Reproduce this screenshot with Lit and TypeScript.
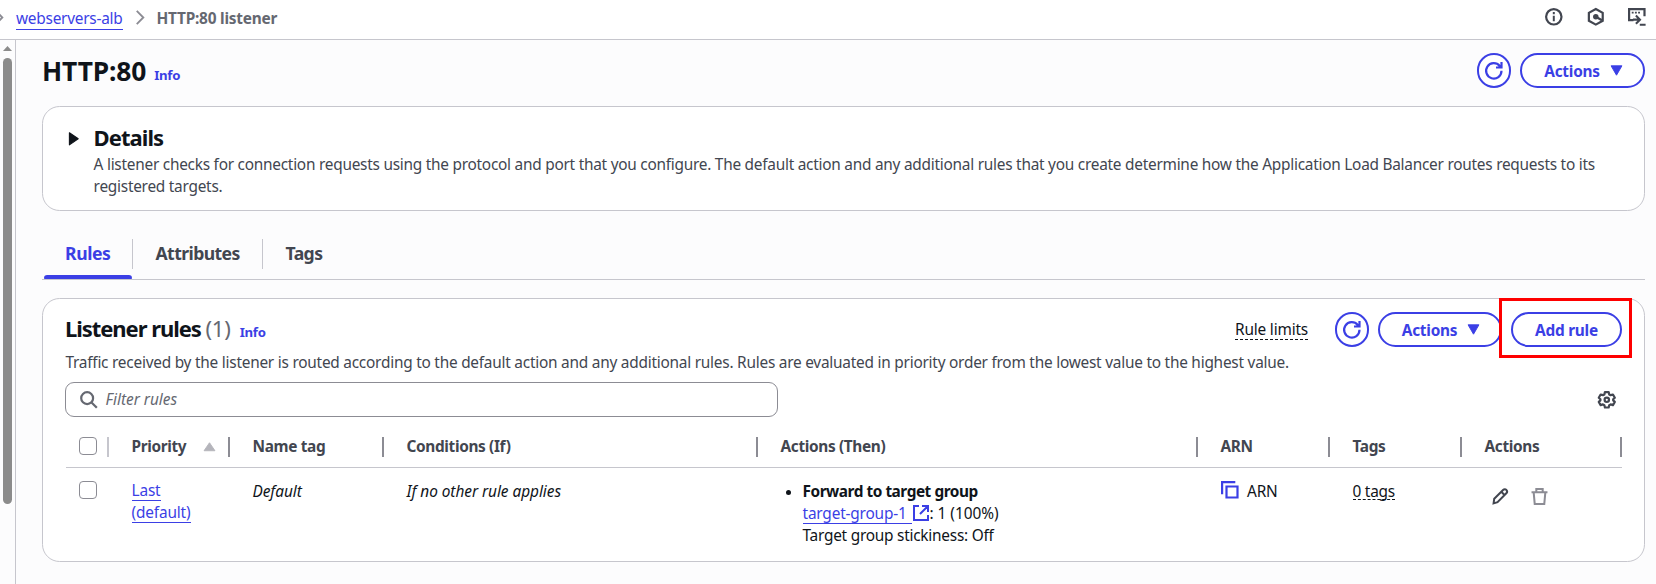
import { LitElement, html, svg, css } from "lit";
import { customElement, property } from "lit/decorators.js";

const shapes: Record<string, unknown> = {
  chevron: svg`<path d="M4 1l7 7-7 7"/>`,
  info: svg`<circle cx="8" cy="8" r="7"/><path d="M8 7v5M8 3.6v2" stroke-width="1.8"/>`,
  hex: svg`<path d="M8 .9l6.3 3.5v7.2L8 15.1l-6.3-3.5V4.4z"/><circle cx="8" cy="8" r="2.5" fill="currentColor" stroke="none"/><path d="M8 8l5.6 3.2"/>`,
  shell: svg`<path d="M15 7.5V1H1v10h4"/><path d="M3.400 4.200h1.700M6.300 4.200H8M9.200 4.200h1.700" stroke-width="1.500"/><path d="M4.500 10.600h6M7.200 6.900l3.700 3.700-3.700 3.700M10.700 15.200H16" stroke-width="1.900"/>`,
  refresh: svg`<path d="M15 8A7 7 0 1 1 13.400 3.600L14.400 5M15 0v5h-5"/>`,
  search: svg`<circle cx="6.500" cy="6.500" r="5.400"/><path d="M10.500 10.500l4.800 4.800"/>`,
  gear: svg`<path d="M6.300 1h3.400l.5 2.100 1.300.7 2.100-.6 1.700 2.900L13.800 7.500v1l1.500 1.400-1.700 2.900-2.100-.6-1.300.7L9.700 15H6.300l-.5-2.100-1.300-.7-2.100.6L.7 9.900l1.500-1.400v-1L.7 6.100l1.700-2.900 2.100.6 1.300-.7z" stroke-linejoin="round"/><circle cx="8" cy="8" r="2"/>`,
  external: svg`<path d="M6 1H1v14h14v-5M9 1h6v6M15 1L7 9"/>`,
  copy: svg`<path d="M1 12V1h12"/><path d="M5 5h10v10H5z"/>`,
  edit: svg`<path d="M1.500 14.500l.6-4.400 8.300-8.300c1-1 2.300-.9 3.100 0s1 2.200 0 3.200l-8.300 8.300zM8.800 3.600l3.400 3.400"/>`,
  trash: svg`<path d="M.5 4h15M5 4V1h6v3M2.500 4l1 11h9l1-11"/>`,
  down: svg`<path d="M2.200 3h11.600L8 13z" fill="currentColor" stroke-linejoin="round"/>`,
  up: svg`<path d="M2.200 12.500h11.600L8 4z" fill="currentColor" stroke-linejoin="round"/>`,
  right: svg`<path d="M4 2.500v11l8-5.500z" fill="currentColor" stroke-linejoin="round"/>`,
};

@customElement("ui-icon")
class UiIcon extends LitElement {
  @property() name = "";
  static styles = css`
    :host { display: block; flex: none; width: 17.6px; height: 17.6px; }
    svg { display: block; width: 100%; height: 100%; overflow: visible; fill: none; stroke: currentColor; stroke-width: var(--stroke, 2); }
  `;
  render() {
    return html`<svg viewBox="0 0 16 16">${shapes[this.name]}</svg>`;
  }
}

@customElement("app-root")
class AppRoot extends LitElement {
  static styles = css`
    :host { display: flex; flex-direction: column; height: 584px; overflow: hidden; box-sizing: border-box; background: #fcfcfd; color: #0f141a; font: 15.4px/22px "Noto Sans", "Open Sans", sans-serif; letter-spacing: -0.24px; }
    *, *::before, *::after { box-sizing: border-box; }
    h1, h2, p, ul { margin: 0; }
    .top { flex: none; height: 40px; display: flex; align-items: center; background: #fff; border-bottom: 1px solid #c6c6cd; padding: 0 10px 5px 0; color: #424650; }
    .crumbs { display: flex; align-items: center; flex: 1; color: #656871; }
    .crumbs ui-icon { color: #8c8c94; width: 15px; height: 15px; }
    .crumbs .first { margin-left: -8px; }
    .crumbs .link { margin: 4px 10px 0 9px; }
    .crumbs b { margin: 3px 0 0 9px; letter-spacing: -0.23px; }
    .link { color: #3b3fe5; border-bottom: 1px solid #3b3fe5; line-height: 20px; height: 21px; }
    .tools { display: flex; gap: 24px; }
    .main { flex: 1; display: flex; min-height: 0; }
    .scroll { flex: none; width: 16px; border-right: 1px solid #c6c6cd; display: flex; flex-direction: column; padding: 6px 0 0 3px; gap: 7px; }
    .arrow { width: 9px; height: 5px; background: #8b8b8b; clip-path: polygon(50% 0, 100% 100%, 0 100%); }
    .thumb { width: 9px; height: 446px; border-radius: 5px; background: #8b8b8b; }
    .page { flex: 1; padding: 13px 11px 0 26px; min-width: 0; }
    .row { display: flex; align-items: center; }
    .head { height: 35px; }
    h1 { font-size: 26.4px; line-height: 33px; letter-spacing: -0.15px; margin-top: 1px; }
    .info { color: #3b3fe5; font-weight: 700; font-size: 13.2px; line-height: 17px; }
    .h1info { margin: 9px 0 0 8px; }
    .h2info { margin: 5px 0 0 9px; }
    .push { margin-left: auto; }
    .btn { flex: none; height: 35px; border: 2px solid #3b3fe5; border-radius: 18px; color: #3b3fe5; background: #fff; display: flex; align-items: center; justify-content: center; font-weight: 700; padding-top: 2px; }
    .round { width: 34px; margin-right: 9px; padding: 0; }
    .menu { width: 125px; gap: 9px; padding-left: 3px; }
    .menu ui-icon { width: 15px; height: 15px; --stroke: 1; margin-top: -2px; }
    .inner { width: 124px; margin-right: 9px; }
    .add { width: 111px; }
    .limits { margin-right: 27px; letter-spacing: -0.18px; }
    .card { border: 1px solid #c6c6cd; border-radius: 17.6px; background: #fff; }
    .details { margin-top: 18px; height: 105px; padding: 17px 24px; display: flex; }
    .details ui-icon { margin: 6px 11px 0 -2px; --stroke: 1; }
    h2 { font-size: 22px; line-height: 26px; letter-spacing: -0.95px; }
    .sub { color: #424650; }
    .details .sub { margin-top: 4px; width: 1520px; letter-spacing: -0.25px; }
    .tabs { margin-top: 28px; height: 41px; border-bottom: 1px solid #c6c6cd; display: flex; font-size: 17.6px; font-weight: 700; color: #424650; letter-spacing: -0.58px; }
    .tab { height: 40px; position: relative; padding: 0 23.500px; line-height: 29px; }
    .tab + .tab::before { content: ""; position: absolute; left: 0; top: 0; width: 1px; height: 30px; background: #c6c6cd; }
    .on { width: 90px; padding-left: 23px; color: #3b3fe5; letter-spacing: -0.4px; }
    .on::after { content: ""; position: absolute; left: 2px; bottom: 0; width: 88px; height: 4px; border-radius: 4px 4px 1px 1px; background: #3b3fe5; }
    .second { width: 130px; }
    .rules { margin-top: 18px; height: 264px; padding: 13px 22px 0 23px; }
    .rules h2 { margin: -3px 0 0 -1px; letter-spacing: -1.05px; }
    .count { color: #656871; font-weight: 400; letter-spacing: -0.2px; margin-left: 0; }
    .desc { margin: 5px 0 8px -0.5px; letter-spacing: -0.235px; }
    .dash { border-bottom: 1px dashed #0f141a; line-height: 19px; height: 20px; }
    .mark { position: relative; }
    .mark::after { content: ""; position: absolute; left: -14px; top: -16px; width: 133px; height: 60px; border: 3px solid #fe0000; }
    .filter { width: 713px; height: 35px; margin-left: -1px; border: 1px solid #8c8c94; border-radius: 9px; padding-left: 14px; gap: 8px; color: #656871; font-style: italic; letter-spacing: 0; }
    .filter span { margin-top: 1px; }
    .gear { color: #424650; margin-right: 6px; }
    .grid { display: grid; grid-template-columns: 43px 121px 154px 374px 440px 132px 132px 160px; }
    .th { height: 51px; border-bottom: 1px solid #c6c6cd; display: flex; align-items: center; position: relative; padding: 0 0 0 22.500px; color: #424650; font-weight: 700; letter-spacing: -0.35px; }
    .th::after { content: ""; position: absolute; right: 0; top: 20px; width: 2px; height: 20px; background: #8c8c94; }
    .th:first-child::after { background: #c6c6cd; }
    .th:first-child { padding-left: 13px; }
    .th, .td { min-width: 0; }
    .th span { margin-top: 10px; }
    .up { margin: 9px 13px 0 auto; color: #b4b4bb; --stroke: 1; width: 15px; height: 15px; }
    .td { padding: 13px 0 0 22.500px; }
    .td.pick { padding: 13px 0 0 13px; }
    .box { display: block; width: 18px; height: 18px; border: 1px solid #8c8c94; border-radius: 4px; }
    .th .box { margin-top: 8px; }
    .td .link { display: block; width: max-content; height: 20px; line-height: 20px; margin: 0 0 2px; letter-spacing: -0.15px; }
    .td .dash { display: block; width: max-content; height: 19px; line-height: 21px; }
    i { display: block; letter-spacing: -0.04px; line-height: 21px; }
    ul { padding-left: 22px; margin-top: -0.5px; }
    ul b { letter-spacing: -0.46px; }
    .line { display: flex; }
    .line .link { padding-right: 5px; margin: 0; line-height: 22px; height: 21px; letter-spacing: -0.18px; }
    .line .val { letter-spacing: -0.05px; }
    .line ui-icon { color: #3b3fe5; width: 16px; height: 16px; margin: 2px 1px 0; }
    .arn { display: flex; gap: 9px; line-height: 21px; }
    .arn ui-icon { color: #3b3fe5; margin-top: 0; }
    .acts { display: flex; gap: 22px; padding: 20px 0 0 30px; color: #424650; }
    .acts ui-icon { width: 17px; height: 17px; --stroke: 1.9; }
    .acts .off { color: #8c8c94; }
  `;

  render() {
    const refresh = html`<span class="btn round"><ui-icon name="refresh"></ui-icon></span>`;
    return html`
      <header class="top">
        <div class="crumbs">
          <ui-icon class="first" name="chevron"></ui-icon><span class="link">webservers-alb</span><ui-icon name="chevron"></ui-icon><b>HTTP:80 listener</b>
        </div>
        <div class="tools"><ui-icon name="info"></ui-icon><ui-icon name="hex"></ui-icon><ui-icon name="shell"></ui-icon></div>
      </header>
      <div class="main">
        <div class="scroll"><div class="arrow"></div><div class="thumb"></div></div>
        <div class="page">
          <div class="row head">
            <h1>HTTP:80</h1><span class="info h1info">Info</span><span class="push"></span>${refresh}
            <span class="btn menu">Actions<ui-icon name="down"></ui-icon></span>
          </div>
          <section class="card details">
            <ui-icon name="right"></ui-icon>
            <div><h2>Details</h2><p class="sub">A listener checks for connection requests using the protocol and port that you configure. The default action and any additional rules that you create determine how the Application Load Balancer routes requests to its registered targets.</p></div>
          </section>
          <nav class="tabs"><div class="tab on">Rules</div><div class="tab second">Attributes</div><div class="tab">Tags</div></nav>
          <section class="card rules">
            <div class="row head">
              <h2>Listener rules <span class="count">(1)</span></h2><span class="info h2info">Info</span>
              <span class="dash push limits">Rule limits</span>${refresh}
              <span class="btn menu inner">Actions<ui-icon name="down"></ui-icon></span>
              <span class="btn add mark">Add rule</span>
            </div>
            <p class="sub desc">Traffic received by the listener is routed according to the default action and any additional rules. Rules are evaluated in priority order from the lowest value to the highest value.</p>
            <div class="row"><div class="row filter"><ui-icon name="search"></ui-icon><span>Filter rules</span></div><ui-icon class="push gear" name="gear"></ui-icon></div>
            <div class="grid">
              <div class="th"><span class="box"></span></div>
              <div class="th"><span>Priority</span><ui-icon class="up" name="up"></ui-icon></div>
              ${["Name tag", "Conditions (If)", "Actions (Then)", "ARN", "Tags", "Actions"].map((t) => html`<div class="th"><span>${t}</span></div>`)}
              <div class="td pick"><span class="box"></span></div>
              <div class="td"><span class="link">Last</span><span class="link">(default)</span></div>
              <div class="td"><i>Default</i></div>
              <div class="td"><i>If no other rule applies</i></div>
              <div class="td"><ul><li><b>Forward to target group</b><div class="line"><span class="link">target-group-1</span><ui-icon name="external"></ui-icon><span class="val">: 1 (100%)</span></div>Target group stickiness: Off</li></ul></div>
              <div class="td arn"><ui-icon name="copy"></ui-icon>ARN</div>
              <div class="td"><span class="dash">0 tags</span></div>
              <div class="td acts"><ui-icon name="edit"></ui-icon><ui-icon class="off" name="trash"></ui-icon></div>
            </div>
          </section>
        </div>
      </div>`;
  }
}
